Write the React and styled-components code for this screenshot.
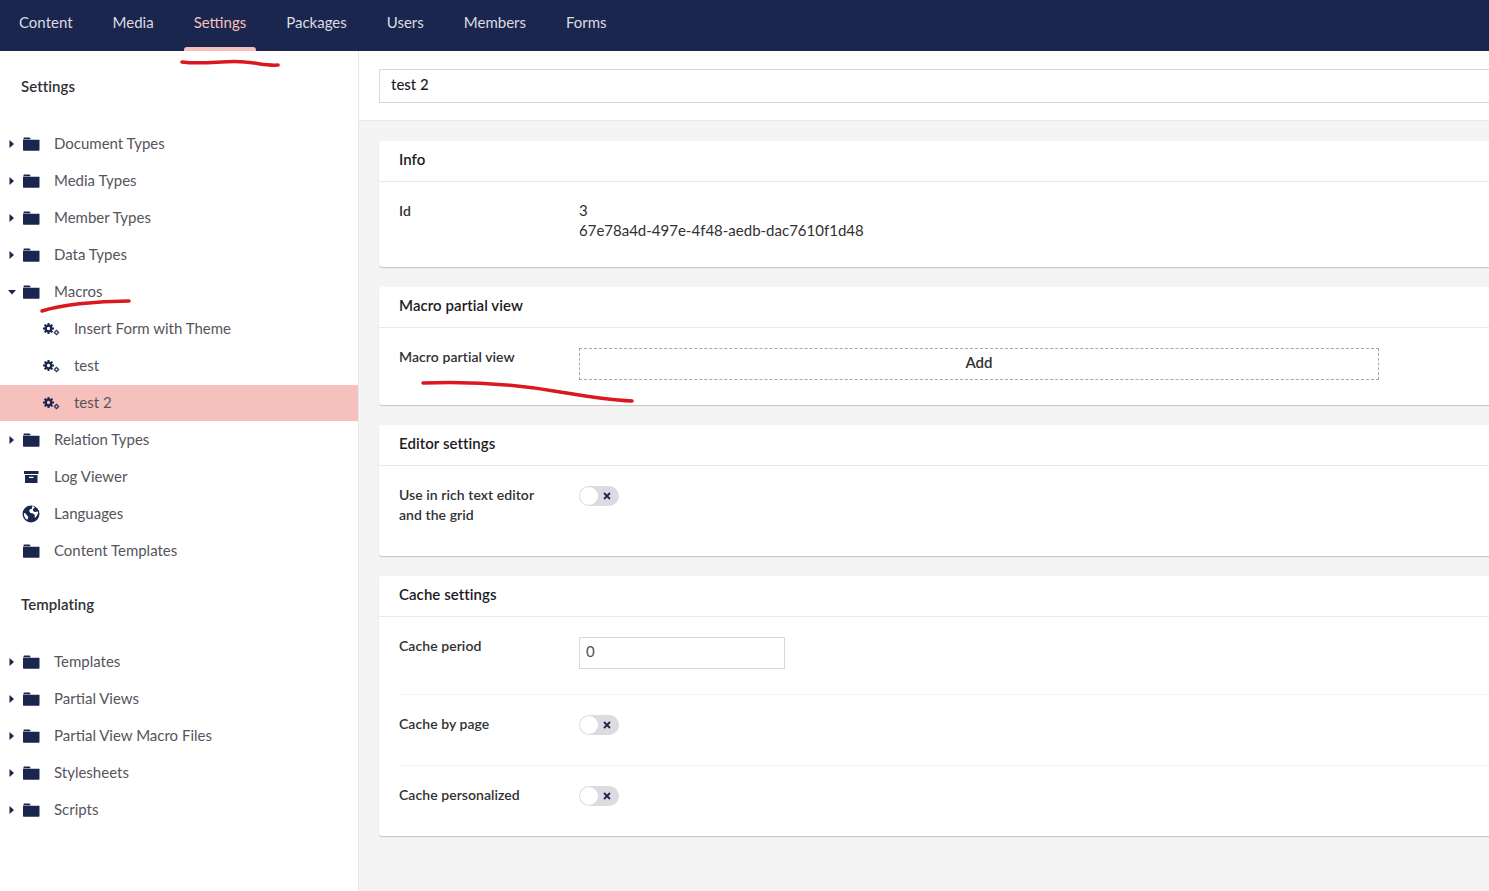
import React from "react";
import styled, { createGlobalStyle } from "styled-components";

const GlobalStyle = createGlobalStyle`
  html, body { margin: 0; padding: 0; height: 100%; overflow: hidden; }
  body { font-family: Lato, "Open Sans", sans-serif; font-size: 15px; color: #1b264f; background: #fff; }
  * { box-sizing: border-box; }
`;

const Page = styled.div`
  position: relative;
  width: 1489px;
  height: 891px;
  display: flex;
  flex-direction: column;
  overflow: hidden;
`;

const TopBar = styled.nav`
  height: 51px;
  flex: none;
  display: flex;
  background: #1b264f;
`;

const NavItem = styled.a`
  position: relative;
  padding: 0 20px 0 ${(p) => (p.$first ? 19 : 20)}px;
  line-height: 44px;
  font-size: 15px;
  color: ${(p) => (p.$active ? "#f5c1bc" : "#dcdce0")};
  &::after {
    content: "";
    display: ${(p) => (p.$active ? "block" : "none")};
    position: absolute;
    left: 10px;
    right: 10px;
    bottom: 0;
    height: 4px;
    border-radius: 3px 3px 0 0;
    background: #f5c1bc;
  }
`;

const Body = styled.div`
  flex: 1;
  display: flex;
  min-height: 0;
`;

const Sidebar = styled.aside`
  width: 359px;
  flex: none;
  background: #fff;
  border-right: 1px solid #e9e9eb;
`;

const TreeHeading = styled.h3`
  margin: 0;
  height: 74px;
  padding: 25px 0 0 21px;
  font-size: 15px;
  line-height: 20px;
  font-weight: 600;
  letter-spacing: 0.06px;
  color: #303033;
`;

const TreeRow = styled.div`
  height: ${(p) => (p.$active ? 36 : 37)}px;
  margin-top: ${(p) => (p.$active ? 1 : 0)}px;
  display: flex;
  align-items: center;
  padding-left: ${(p) => (p.$child ? 43 : 8)}px;
  background: ${(p) => (p.$active ? "#f6c1bc" : "transparent")};
  color: #56555c;
  font-size: 15px;
`;

const RowText = styled.span`
  margin-top: -2px;
`;

const CaretSlot = styled.span`
  width: 14px;
  flex: none;
  display: flex;
  align-items: center;
`;

const IconSlot = styled.span`
  width: ${(p) => (p.$child ? 31 : 32)}px;
  flex: none;
  display: flex;
  align-items: center;
`;

const Main = styled.main`
  flex: 1;
  min-width: 0;
  background: #f5f4f4;
`;

const NameBar = styled.div`
  height: 70px;
  padding: 18px 0 0 20px;
  background: #fff;
  border-bottom: 1px solid #e9e9eb;
`;

const NameInput = styled.div`
  width: 1200px;
  height: 34px;
  padding: 0 11px;
  border: 1px solid #d8d7d9;
  line-height: 29px;
  font-size: 15px;
  font-weight: 500;
  color: #1b1b1f;
`;

const Content = styled.div`
  padding: 20px 0 0 20px;
  display: flex;
  flex-direction: column;
  gap: 20px;
`;

const Card = styled.section`
  width: 1200px;
  background: #fff;
  border-radius: 3px;
  box-shadow: 0 1px 1px rgba(0, 0, 0, 0.2);
`;

const CardTitle = styled.h4`
  margin: 0;
  height: 41px;
  padding: 0 20px;
  border-bottom: 1px solid #e9e9eb;
  font-size: 15px;
  font-weight: 600;
  letter-spacing: 0.06px;
  line-height: 36px;
  color: #1b1b1f;
`;

const CardBody = styled.div`
  padding: 20px 20px 0;
  height: ${(p) => p.$h}px;
`;

const Field = styled.div`
  display: flex;
  height: ${(p) => (p.$h ? `${p.$h}px` : "auto")};
  border-bottom: ${(p) => (p.$line ? "1px solid #f5f4f4" : "none")};
  margin-bottom: ${(p) => p.$mb || 0}px;
`;

const Label = styled.div`
  width: 180px;
  flex: none;
  margin-top: -1px;
  font-size: 14px;
  font-weight: 600;
  letter-spacing: 0.06px;
  line-height: 20px;
  color: #303033;
`;

const Value = styled.div`
  margin-top: -2px;
  font-size: 15px;
  line-height: 20px;
  color: #303033;
`;

const AddButton = styled.div`
  width: 800px;
  height: 32px;
  border: 1px dashed #a8a8ad;
  text-align: center;
  font-size: 15px;
  font-weight: 600;
  line-height: 26px;
  color: #303033;
`;

const NumberInput = styled.div`
  width: 206px;
  height: 32px;
  padding: 0 6px;
  border: 1px solid #d8d7d9;
  font-size: 15px;
  line-height: 27px;
  color: #515054;
`;

const Toggle = styled.span`
  position: relative;
  display: block;
  width: 40px;
  height: 20px;
  border-radius: 10px;
  background: #dcdce0;
  &::before {
    content: "";
    position: absolute;
    left: 1px;
    top: 1px;
    width: 18px;
    height: 18px;
    border-radius: 50%;
    background: #fff;
  }
`;

const ToggleX = styled.svg`
  position: absolute;
  right: 8px;
  top: 6px;
`;

const Scribble = styled.svg`
  position: absolute;
  left: 0;
  top: 0;
  pointer-events: none;
`;

const navItems = ["Content", "Media", "Settings", "Packages", "Users", "Members", "Forms"];

const Folder = () => (
  <svg width="18" height="14" viewBox="0 0 18 14">
    <path fill="#1b264f" d="M1.500 1.200C1.500.8 1.800.5 2.200.5h5c.5 0 .9.300 1.100 1.100l.2.700h-7zM1 2.800h16.500v10c0 .6-.4 1-1 1H2c-.6 0-1-.4-1-1z" />
  </svg>
);

const Archive = () => (
  <svg width="18" height="14" viewBox="0 0 18 14">
    <path fill="#1b264f" fillRule="evenodd" d="M2 1h14.500v3H2zM3 5h12.500v8H3zM7 6.800v1.200h4.500V6.800z" />
  </svg>
);

const Globe = () => (
  <svg width="18" height="18" viewBox="0 0 18 18">
    <circle cx="9" cy="9" r="8.500" fill="#1b264f" />
    <path fill="#fff" d="M10 1.200l2 .4.800 1.200-1.600 1-.3 1.800 1.600 1.300 3.400-.5.300 1.400-1.200 2.700-1.800 2.300-.6-.3.200-2.600-1.800-1.400-2.500-.4-1.300-1.800.7-2 2-.6zM1.900 8l1.700.5 1.600 2.200 1.100.7-.3 2.100-.8 1.300C3 13.700 1.700 11 1.900 8z" />
  </svg>
);

const Cogs = () => (
  <svg width="18" height="14" viewBox="0 0 18 14">
    <g fill="none" stroke="#1b264f">
      <circle cx="5.500" cy="6.500" r="2.800" strokeWidth="2.300" />
      <path strokeWidth="2" d="M5.500 1v2M5.500 10v2M0 6.500h2M9 6.500h2M1.600 2.600L3 4M8 9l1.400 1.400M9.400 2.600L8 4M3 9L1.600 10.400" />
      <circle cx="13.500" cy="10.500" r="1.700" strokeWidth="1.200" />
      <path strokeWidth="0.900" d="M13.500 7.700v1M13.500 12.300v1M10.700 10.500h1M15.300 10.500h1" />
    </g>
  </svg>
);

const Caret = ({ open }) => (
  <svg width="8" height="8" viewBox="0 0 8 8">
    <path fill="#1b264f" d={open ? "M0 2h8L4 6.500z" : "M1.500 0L6 4 1.500 8z"} />
  </svg>
);

const icons = { folder: Folder, archive: Archive, globe: Globe, cogs: Cogs };

function Row({ label, icon = "folder", caret, open, child, active }) {
  const Icon = icons[icon];
  return (
    <TreeRow $child={child} $active={active}>
      {!child && <CaretSlot>{caret && <Caret open={open} />}</CaretSlot>}
      <IconSlot $child={child}>
        <Icon />
      </IconSlot>
      <RowText>{label}</RowText>
    </TreeRow>
  );
}

function OffToggle() {
  return (
    <Toggle>
      <ToggleX width="8" height="8" viewBox="0 0 8 8">
        <path stroke="#1b264f" strokeWidth="1.800" d="M1 1l6 6M7 1L1 7" />
      </ToggleX>
    </Toggle>
  );
}

export default function App() {
  return (
    <Page>
      <GlobalStyle />
      <TopBar>
        {navItems.map((n, i) => (
          <NavItem key={n} $active={n === "Settings"} $first={i === 0}>
            {n}
          </NavItem>
        ))}
      </TopBar>
      <Body>
        <Sidebar>
          <TreeHeading>Settings</TreeHeading>
          <Row caret label="Document Types" />
          <Row caret label="Media Types" />
          <Row caret label="Member Types" />
          <Row caret label="Data Types" />
          <Row caret open label="Macros" />
          <Row child icon="cogs" label="Insert Form with Theme" />
          <Row child icon="cogs" label="test" />
          <Row child active icon="cogs" label="test 2" />
          <Row caret label="Relation Types" />
          <Row icon="archive" label="Log Viewer" />
          <Row icon="globe" label="Languages" />
          <Row label="Content Templates" />
          <TreeHeading>Templating</TreeHeading>
          <Row caret label="Templates" />
          <Row caret label="Partial Views" />
          <Row caret label="Partial View Macro Files" />
          <Row caret label="Stylesheets" />
          <Row caret label="Scripts" />
        </Sidebar>
        <Main>
          <NameBar>
            <NameInput>test 2</NameInput>
          </NameBar>
          <Content>
            <Card>
              <CardTitle>Info</CardTitle>
              <CardBody $h={85}>
                <Field>
                  <Label>Id</Label>
                  <Value>
                    3
                    <br />
                    67e78a4d-497e-4f48-aedb-dac7610f1d48
                  </Value>
                </Field>
              </CardBody>
            </Card>
            <Card>
              <CardTitle>Macro partial view</CardTitle>
              <CardBody $h={77}>
                <Field>
                  <Label>Macro partial view</Label>
                  <AddButton>Add</AddButton>
                </Field>
              </CardBody>
            </Card>
            <Card>
              <CardTitle>Editor settings</CardTitle>
              <CardBody $h={90}>
                <Field>
                  <Label>
                    Use in rich text editor
                    <br />
                    and the grid
                  </Label>
                  <OffToggle />
                </Field>
              </CardBody>
            </Card>
            <Card>
              <CardTitle>Cache settings</CardTitle>
              <CardBody $h={219}>
                <Field $h={58} $line $mb={20}>
                  <Label>Cache period</Label>
                  <NumberInput>0</NumberInput>
                </Field>
                <Field $h={51} $line $mb={20}>
                  <Label>Cache by page</Label>
                  <OffToggle />
                </Field>
                <Field>
                  <Label>Cache personalized</Label>
                  <OffToggle />
                </Field>
              </CardBody>
            </Card>
          </Content>
        </Main>
      </Body>
      <Scribble width="1489" height="891" viewBox="0 0 1489 891">
        <g fill="none" stroke="#d9181f" strokeWidth="3.500" strokeLinecap="round">
          <path d="M182 62C205 65 225 60 245 62C258 63 268 66 278 65" />
          <path d="M42 311C60 305 95 301 129 301" />
          <path d="M423 383C470 381 520 385 560 392C590 397 610 400 632 401" />
        </g>
      </Scribble>
    </Page>
  );
}
